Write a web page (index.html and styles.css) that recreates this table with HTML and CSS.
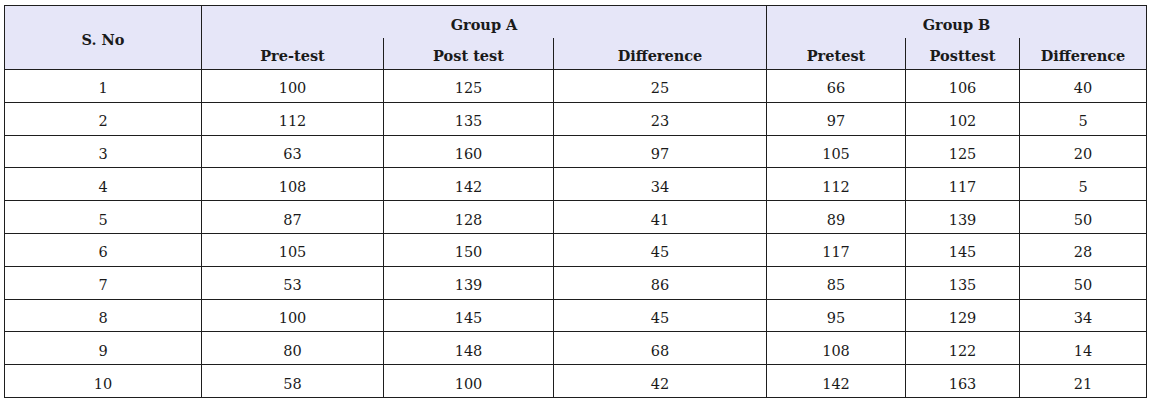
FILE: index.html
```html
<!DOCTYPE html>
<html>
<head>
<meta charset="utf-8">
<link rel="stylesheet" href="styles.css">
</head>
<body>
<table class="data">
  <colgroup>
    <col class="c1"><col class="c2"><col class="c3"><col class="c4"><col class="c5"><col class="c6"><col class="c7">
  </colgroup>
  <thead>
    <tr class="h1">
      <th rowspan="2">S. No</th>
      <th colspan="3" class="grp">Group A</th>
      <th colspan="3" class="grp">Group B</th>
    </tr>
    <tr class="h2">
      <th class="sub first">Pre-test</th>
      <th class="sub">Post test</th>
      <th class="sub last">Difference</th>
      <th class="sub first">Pretest</th>
      <th class="sub">Posttest</th>
      <th class="sub last">Difference</th>
    </tr>
  </thead>
  <tbody>
    <tr><td>1</td><td>100</td><td>125</td><td>25</td><td>66</td><td>106</td><td>40</td></tr>
    <tr><td>2</td><td>112</td><td>135</td><td>23</td><td>97</td><td>102</td><td>5</td></tr>
    <tr><td>3</td><td>63</td><td>160</td><td>97</td><td>105</td><td>125</td><td>20</td></tr>
    <tr><td>4</td><td>108</td><td>142</td><td>34</td><td>112</td><td>117</td><td>5</td></tr>
    <tr><td>5</td><td>87</td><td>128</td><td>41</td><td>89</td><td>139</td><td>50</td></tr>
    <tr><td>6</td><td>105</td><td>150</td><td>45</td><td>117</td><td>145</td><td>28</td></tr>
    <tr><td>7</td><td>53</td><td>139</td><td>86</td><td>85</td><td>135</td><td>50</td></tr>
    <tr><td>8</td><td>100</td><td>145</td><td>45</td><td>95</td><td>129</td><td>34</td></tr>
    <tr><td>9</td><td>80</td><td>148</td><td>68</td><td>108</td><td>122</td><td>14</td></tr>
    <tr><td>10</td><td>58</td><td>100</td><td>42</td><td>142</td><td>163</td><td>21</td></tr>
  </tbody>
</table>
</body>
</html>
```
FILE: styles.css
```css
html, body {
  margin: 0;
  padding: 0;
  background: #ffffff;
}
body {
  padding: 5px 0 0 4px;
  font-family: "DejaVu Serif", "Liberation Serif", serif;
  font-size: 14.5px;
  color: #1a1a1a;
}
.data {
  border-collapse: collapse;
  table-layout: fixed;
  width: 1143px;
}
.c1 { width: 197px; }
.c2 { width: 182px; }
.c3 { width: 170px; }
.c4 { width: 213px; }
.c5 { width: 139px; }
.c6 { width: 114px; }
.c7 { width: 127px; }
.data th, .data td {
  border: 1px solid #1e1e1e;
  text-align: center;
  vertical-align: middle;
  padding: 0;
}
.data thead th {
  background: #e6e6f8;
  font-weight: bold;
  padding-top: 4px;
}
.h1 th { height: 28px; }
.h2 th { height: 27px; }
.data th.grp { border-bottom: none; }
.data th.sub { border-top: none; }
.data th.sub.first { border-left: 1px solid #1e1e1e; }
.data tbody td {
  height: 26.8px;
  padding-top: 5px;
}
```
